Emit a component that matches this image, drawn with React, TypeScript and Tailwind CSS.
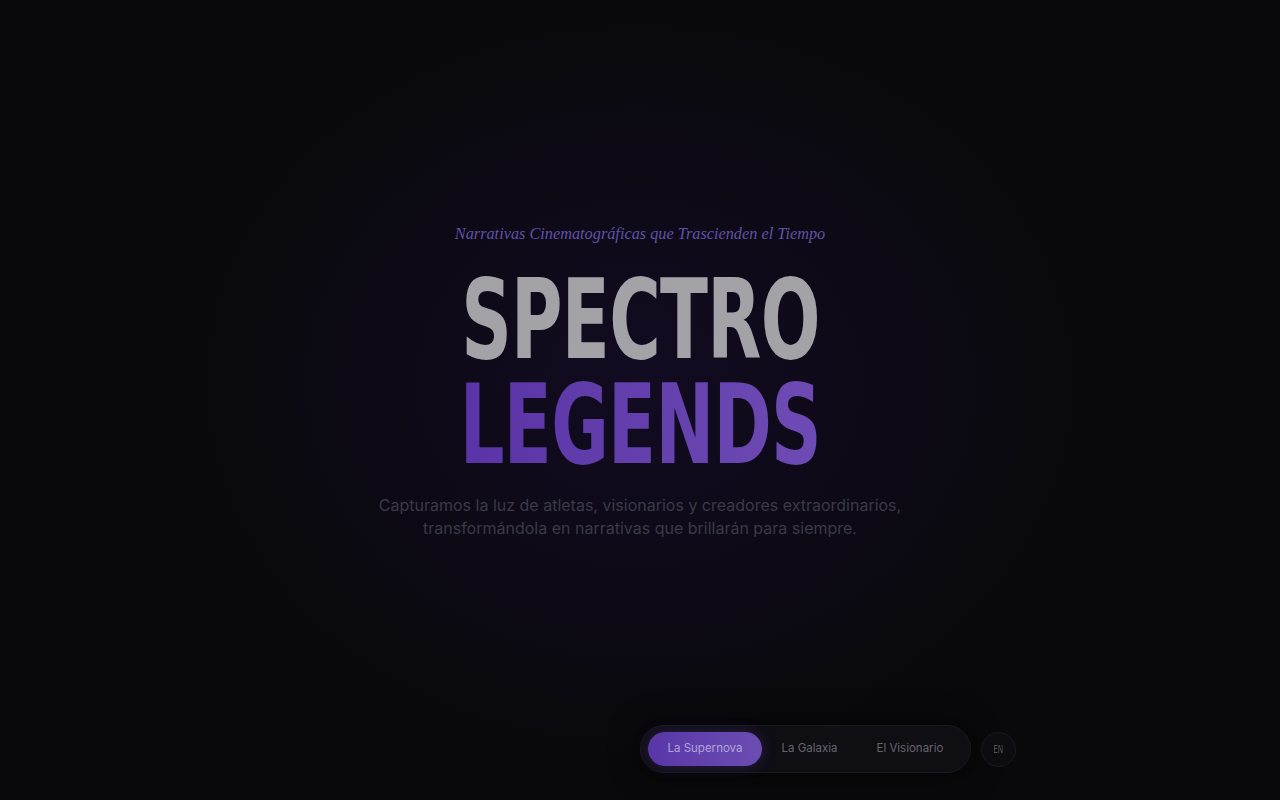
const NAV = ['La Supernova', 'La Galaxia', 'El Visionario'];

export default function App() {
  const active = 0;
  return (
    <div className="h-screen w-full overflow-hidden flex flex-col bg-[#09090b] bg-[radial-gradient(ellipse_460px_380px_at_50%_48%,#120b22_0%,#0e0a18_45%,#09090b_100%)] font-['Inter',sans-serif]">
      <main className="flex-1 flex flex-col items-center pt-[222px]">
        <p className="font-['Liberation_Serif',serif] italic text-[16.3px] leading-[24px] text-[#6152a6]">
          Narrativas Cinematográficas que Trascienden el Tiempo
        </p>
        <h1 className="mt-[22px] flex flex-col items-center font-['DejaVu_Sans_Condensed',sans-serif] font-bold uppercase text-[110px] leading-[105px] tracking-[-1px]">
          <span className="inline-block scale-x-[0.71] text-[#a3a2a6]">Spectro</span>
          <span className="inline-block scale-x-[0.71] bg-gradient-to-r from-[#5a33a6] to-[#6e4bb4] bg-clip-text text-transparent">
            Legends
          </span>
        </h1>
        <p className="mt-[16px] text-center text-[16px] leading-[23px] text-[#3b3a47]">
          Capturamos la luz de atletas, visionarios y creadores extraordinarios,
          <br />
          transformándola en narrativas que brillarán para siempre.
        </p>
      </main>
      <footer className="pl-[640px] pb-[27px] flex items-center gap-[10px]">
        <nav className="flex items-center h-[48px] p-[7px] rounded-full bg-[#0f0e13] border border-[#1a1920] shadow-[0_0_30px_rgba(0,0,0,0.6)]">
          {NAV.map((label, i) => (
            <button
              key={label}
              type="button"
              className={
                i === active
                  ? 'h-[34px] px-[19.5px] rounded-full text-[11.5px] text-[#b1a4d8] bg-gradient-to-r from-[#5a36a8] to-[#6c4db2] shadow-[0_0_14px_rgba(100,60,180,0.35)]'
                  : 'h-[34px] px-[19.5px] rounded-full text-[11.5px] text-[#66656f]'
              }
            >
              {label}
            </button>
          ))}
        </nav>
        <button
          type="button"
          className="w-[35px] h-[35px] rounded-full border border-[#1a1920] bg-[#0d0c11] text-[10px] text-[#55545c] font-['DejaVu_Sans_Condensed',sans-serif]"
        >
          <span className="inline-block scale-x-[0.8]">EN</span>
        </button>
      </footer>
    </div>
  );
}
